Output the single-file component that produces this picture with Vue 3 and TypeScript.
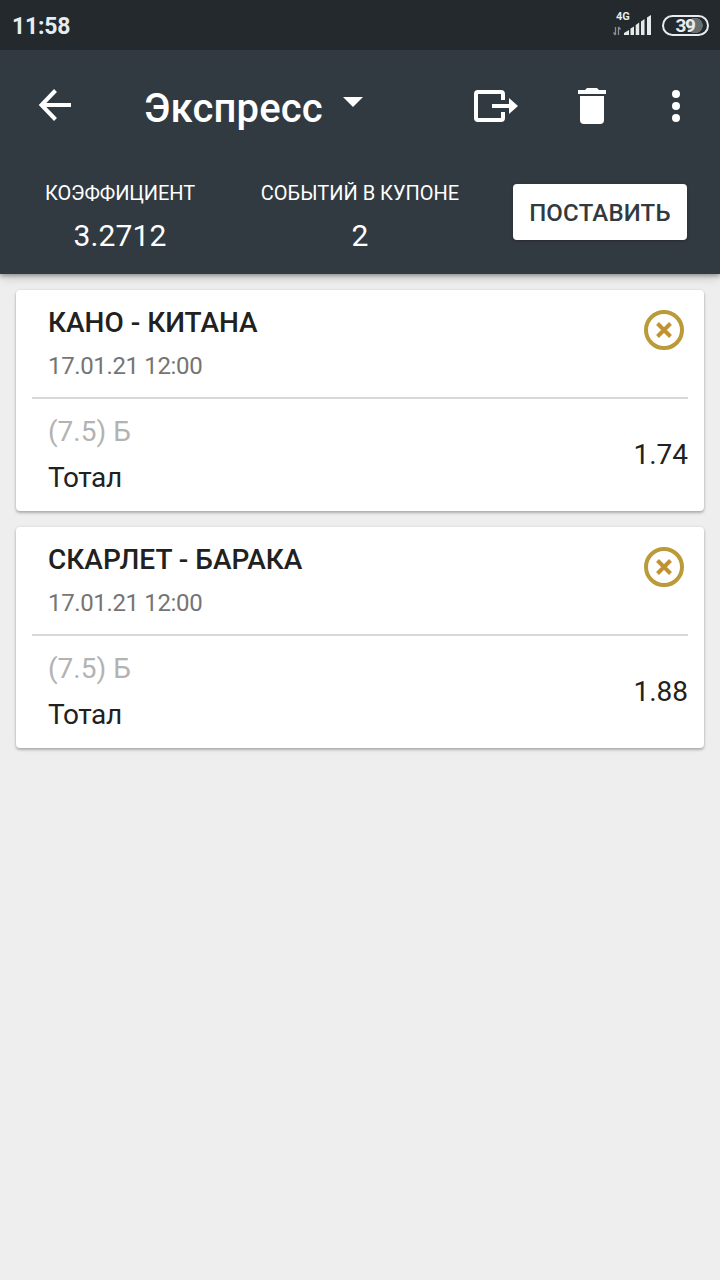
<script setup lang="ts">
interface Bet {
  match: string
  date: string
  outcome: string
  market: string
  odds: string
}

const bets: Bet[] = [
  { match: 'КАНО - КИТАНА', date: '17.01.21 12:00', outcome: '(7.5) Б', market: 'Тотал', odds: '1.74' },
  { match: 'СКАРЛЕТ - БАРАКА', date: '17.01.21 12:00', outcome: '(7.5) Б', market: 'Тотал', odds: '1.88' },
]
</script>

<template>
  <div class="screen">
    <header class="header">
      <div class="status">
        <span class="clock">11:58</span>
        <div class="indicators">
          <div class="signal">
            <span class="network">4G</span>
            <svg width="39" height="21" viewBox="0 0 39 21">
              <g fill="none" stroke="#8b9094" stroke-width="1.3">
                <path d="M2.5 12v8M0.5 17.5l2 2.5" />
                <path d="M5.5 20v-8M7.5 14.5l-2-2.5" />
              </g>
              <g fill="#e6e9ea">
                <path d="M11 20v-2l5-3V20z" />
                <path d="M17.500 20v-6.500l3.500-2v8.500z" />
                <path d="M22.700 20V10l3.500-2.500V20z" />
                <path d="M28 20V6.500l3.500-2.500v16z" />
                <path d="M34 20V2.500l4-2.500V20z" />
              </g>
            </svg>
          </div>
          <div class="battery"><span>39</span></div>
        </div>
      </div>

      <div class="toolbar">
        <svg class="back" width="33" height="34" viewBox="0 0 33 34">
          <path d="M17.500 2.500L3.500 17l14 14.500M3.500 17H33" fill="none" stroke="#fff" stroke-width="4" />
        </svg>
        <h1 class="title">Экспресс</h1>
        <svg class="caret" width="20" height="10" viewBox="0 0 20 10"><path d="M0 0h20L10 10z" fill="#fff" /></svg>
        <svg class="exit" width="46" height="34" viewBox="0 0 46 34">
          <path d="M30 11V5q0-2-2-2H5Q3 3 3 5v24q0 2 2 2h23q2 0 2-2v-6" fill="none" stroke="#fff" stroke-width="4" />
          <path d="M19 15h17V9l9 8-9 8v-6H19z" fill="#fff" />
        </svg>
        <svg class="trash" width="28" height="36" viewBox="0 0 28 36">
          <path d="M0 2h7l2-2h10l2 2h7v4H0z" fill="#fff" />
          <path d="M2 8h24v24q0 4-4 4H6q-4 0-4-4z" fill="#fff" />
        </svg>
        <svg class="more" width="8" height="32" viewBox="0 0 8 32">
          <g fill="#fff"><circle cx="4" cy="4" r="4" /><circle cx="4" cy="16" r="4" /><circle cx="4" cy="28" r="4" /></g>
        </svg>
      </div>

      <div class="summary">
        <div class="stat">
          <span class="label narrow">КОЭФФИЦИЕНТ</span>
          <span class="value">3.2712</span>
        </div>
        <div class="stat">
          <span class="label">СОБЫТИЙ В КУПОНЕ</span>
          <span class="value">2</span>
        </div>
        <div class="action"><button class="place">ПОСТАВИТЬ</button></div>
      </div>
    </header>

    <main class="list">
      <article v-for="bet in bets" :key="bet.match" class="card">
        <div class="event">
          <div>
            <div class="match">{{ bet.match }}</div>
            <div class="date">{{ bet.date }}</div>
          </div>
          <svg class="remove" width="40" height="40" viewBox="0 0 40 40">
            <circle cx="20" cy="20" r="18" fill="none" stroke="#bb9a3a" stroke-width="4" />
            <path d="M13.500 13.500l13 13M26.500 13.500l-13 13" stroke="#c19330" stroke-width="4" />
          </svg>
        </div>
        <div class="pick">
          <div>
            <div class="outcome">{{ bet.outcome }}</div>
            <div class="market">{{ bet.market }}</div>
          </div>
          <div class="odds">{{ bet.odds }}</div>
        </div>
      </article>
    </main>
  </div>
</template>

<style>
body {
  background: #eee;
}
</style>

<style scoped>
.screen {
  height: 1280px;
  overflow: hidden;
  background: #eee;
  font-family: Roboto, "Noto Sans", sans-serif;
}
.header {
  position: relative;
  height: 274px;
  background: #323a41;
  color: #fff;
  box-shadow: 0 2px 4px rgba(0, 0, 0, 0.3), 0 4px 10px rgba(0, 0, 0, 0.14);
}
.status {
  display: flex;
  justify-content: space-between;
  height: 50px;
  padding: 0 11px 0 12px;
  background: #23292d;
  color: #e6ecef;
}
.clock {
  font-size: 23px;
  font-weight: 700;
  line-height: 54px;
  letter-spacing: -0.2px;
}
.indicators {
  display: flex;
  gap: 10px;
}
.signal {
  display: grid;
  padding-top: 15px;
}
.signal > * {
  grid-area: 1 / 1;
}
.network {
  margin: -4px 0 0 3px;
  font-size: 11px;
  font-weight: 700;
  line-height: 12px;
}
.battery {
  box-sizing: border-box;
  width: 47px;
  height: 21px;
  margin-top: 15px;
  padding-right: 1px;
  border: 2px solid #e6ecef;
  border-radius: 10.5px;
  background: #23292d radial-gradient(circle 8px at 31px 8.5px, #686d70 7.5px, transparent 8px);
  text-align: center;
  font-size: 19px;
  font-weight: 700;
  line-height: 17px;
  letter-spacing: -1.5px;
}
.toolbar {
  display: flex;
  align-items: flex-start;
  height: 112px;
}
.back {
  margin: 38px 0 0 38px;
}
.title {
  width: 179px;
  margin: 35px 0 0 73px;
  font-size: 40px;
  font-weight: 500;
  line-height: 48px;
  letter-spacing: 0.15px;
  white-space: nowrap;
}
.caret {
  margin: 47px 0 0 20px;
}
.exit {
  margin: 39px 0 0 110px;
}
.trash {
  margin: 38px 0 0 59px;
}
.more {
  margin: 40px 0 0 66px;
}
.summary {
  display: grid;
  grid-template-columns: repeat(3, 240px);
}
.stat {
  display: flex;
  flex-direction: column;
  align-items: center;
  padding-top: 19px;
}
.label {
  font-size: 20px;
  line-height: 24px;
  white-space: nowrap;
}
.narrow {
  letter-spacing: -0.1px;
}
.value {
  margin-top: 13px;
  font-size: 30px;
  line-height: 36px;
  letter-spacing: 0.1px;
}
.action {
  display: flex;
  justify-content: center;
  padding-top: 22px;
}
.place {
  width: 174px;
  height: 56px;
  padding: 0;
  border: 0;
  border-radius: 4px;
  background: #fff;
  color: #323a41;
  font: 500 24px/58px Roboto, "Noto Sans", sans-serif;
  letter-spacing: 0.2px;
  box-shadow: 0 1px 3px rgba(0, 0, 0, 0.3);
}
.list {
  display: flex;
  flex-direction: column;
  gap: 16px;
  padding: 16px;
}
.card {
  height: 221px;
  border-radius: 4px;
  background: #fff;
  box-shadow: 0 2px 3px rgba(0, 0, 0, 0.26), 0 0 3px rgba(0, 0, 0, 0.1);
  color: #212121;
}
.event {
  display: flex;
  justify-content: space-between;
  height: 107px;
  margin: 0 16px;
  padding: 0 4px 0 16px;
  border-bottom: 2px solid #d8d8d8;
}
.match {
  margin-top: 16px;
  font-size: 28px;
  font-weight: 500;
  line-height: 34px;
}
.date {
  margin-top: 12px;
  font-size: 24px;
  line-height: 28px;
  letter-spacing: -0.36px;
  color: #757575;
}
.remove {
  margin-top: 20px;
}
.pick {
  display: flex;
  justify-content: space-between;
  margin: 0 16px;
  padding-left: 16px;
  font-size: 28px;
  line-height: 34px;
}
.outcome {
  margin-top: 16px;
  color: #b3b3b3;
}
.market {
  margin-top: 12px;
  letter-spacing: -0.4px;
}
.odds {
  margin-top: 39px;
}
</style>
